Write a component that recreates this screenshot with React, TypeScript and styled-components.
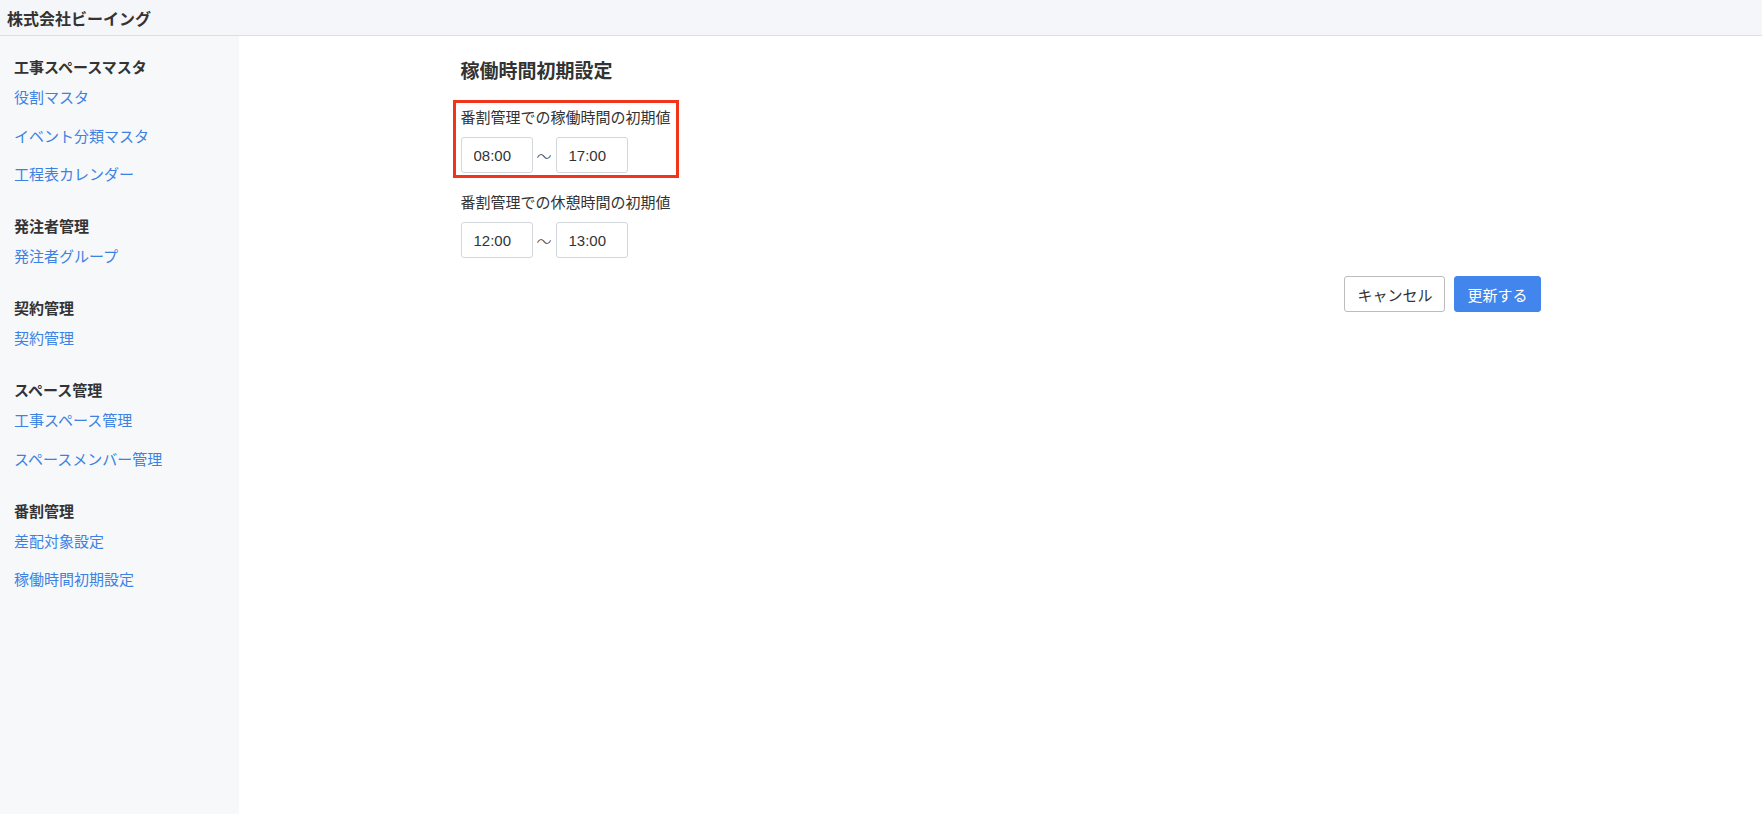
import React from 'react';
import styled, { createGlobalStyle } from 'styled-components';

const GlobalStyle = createGlobalStyle`
  html, body {
    margin: 0;
    padding: 0;
    background: #fff;
  }
  body {
    font-family: "Liberation Sans", "Noto Sans CJK JP", sans-serif;
    color: #333;
  }
`;

const Page = styled.div`
  display: flex;
  flex-direction: column;
  height: 814px;
`;

const Header = styled.header`
  height: 35px;
  flex-shrink: 0;
  display: flex;
  align-items: center;
  padding: 0 7px;
  background: #f4f6f9;
  border-bottom: 1px solid #dcdfe3;
  font-size: 16px;
  font-weight: bold;
  color: #333;
`;

const Body = styled.div`
  flex: 1;
  display: flex;
  min-height: 0;
`;

const Sidebar = styled.nav`
  width: 239px;
  flex-shrink: 0;
  background: #f7f8fa;
  padding: 21px 0 0 14px;
  box-sizing: border-box;
  display: flex;
  flex-direction: column;
  gap: 31px;
`;

const Section = styled.div`
  display: flex;
  flex-direction: column;
`;

const SectionTitle = styled.div`
  font-size: 15px;
  line-height: 21px;
  font-weight: bold;
  color: #333;
  margin-bottom: 9px;
`;

const NavList = styled.div`
  display: flex;
  flex-direction: column;
  gap: 17.5px;
`;

const NavLink = styled.a`
  font-size: 15px;
  line-height: 21px;
  color: #3d82e3;
  text-decoration: none;
  cursor: pointer;
`;

const Main = styled.main`
  flex: 1;
  background: #fff;
`;

const Container = styled.div`
  width: 1080px;
  margin: 0 auto;
  padding-top: 23px;
`;

const Title = styled.h2`
  margin: 0 0 22px;
  font-size: 19px;
  line-height: 26px;
  font-weight: bold;
  color: #333;
`;

const Field = styled.div<{ $marked?: boolean }>`
  position: relative;
  width: fit-content;
  margin-bottom: 19px;

  ${({ $marked }) =>
    $marked &&
    `
    &::after {
      content: '';
      position: absolute;
      top: -7px;
      left: -8px;
      right: -8px;
      bottom: -5px;
      border: 3px solid #f2341b;
      pointer-events: none;
    }
  `}
`;

const Label = styled.div`
  font-size: 15px;
  line-height: 21px;
  color: #333;
  margin-bottom: 9px;
`;

const TimeRow = styled.div`
  display: flex;
  align-items: center;
`;

const TimeInput = styled.input`
  width: 72px;
  height: 36px;
  box-sizing: border-box;
  padding: 0 12px;
  border: 1px solid #d3d6da;
  border-radius: 3px;
  font-family: "Liberation Sans", sans-serif;
  font-size: 15px;
  color: #333;
  background: #fff;
  outline: none;
`;

const Tilde = styled.span`
  width: 23px;
  text-align: center;
  font-size: 15px;
  font-weight: 300;
  color: #444;
`;

const Actions = styled.div`
  display: flex;
  justify-content: flex-end;
  gap: 9px;
  margin-top: -1px;
`;

const Button = styled.button<{ $primary?: boolean }>`
  height: 36px;
  padding: 0 12px;
  border-radius: 3px;
  font-family: "Liberation Sans", "Noto Sans CJK JP", sans-serif;
  font-size: 15px;
  cursor: pointer;
  border: 1px solid ${({ $primary }) => ($primary ? '#4285ec' : '#bcbcbc')};
  background: ${({ $primary }) => ($primary ? '#4285ec' : '#fff')};
  color: ${({ $primary }) => ($primary ? '#fff' : '#333')};
`;

const nav = [
  { title: '工事スペースマスタ', links: ['役割マスタ', 'イベント分類マスタ', '工程表カレンダー'] },
  { title: '発注者管理', links: ['発注者グループ'] },
  { title: '契約管理', links: ['契約管理'] },
  { title: 'スペース管理', links: ['工事スペース管理', 'スペースメンバー管理'] },
  { title: '番割管理', links: ['差配対象設定', '稼働時間初期設定'] },
];

const TimeRange: React.FC<{ from: string; to: string }> = ({ from, to }) => (
  <TimeRow>
    <TimeInput defaultValue={from} />
    <Tilde>〜</Tilde>
    <TimeInput defaultValue={to} />
  </TimeRow>
);

export default function App() {
  return (
    <>
      <GlobalStyle />
      <Page>
        <Header>株式会社ビーイング</Header>
        <Body>
          <Sidebar>
            {nav.map((s) => (
              <Section key={s.title}>
                <SectionTitle>{s.title}</SectionTitle>
                <NavList>
                  {s.links.map((l) => (
                    <NavLink key={l}>{l}</NavLink>
                  ))}
                </NavList>
              </Section>
            ))}
          </Sidebar>
          <Main>
            <Container>
              <Title>稼働時間初期設定</Title>
              <Field $marked>
                <Label>番割管理での稼働時間の初期値</Label>
                <TimeRange from="08:00" to="17:00" />
              </Field>
              <Field>
                <Label>番割管理での休憩時間の初期値</Label>
                <TimeRange from="12:00" to="13:00" />
              </Field>
              <Actions>
                <Button>キャンセル</Button>
                <Button $primary>更新する</Button>
              </Actions>
            </Container>
          </Main>
        </Body>
      </Page>
    </>
  );
}
